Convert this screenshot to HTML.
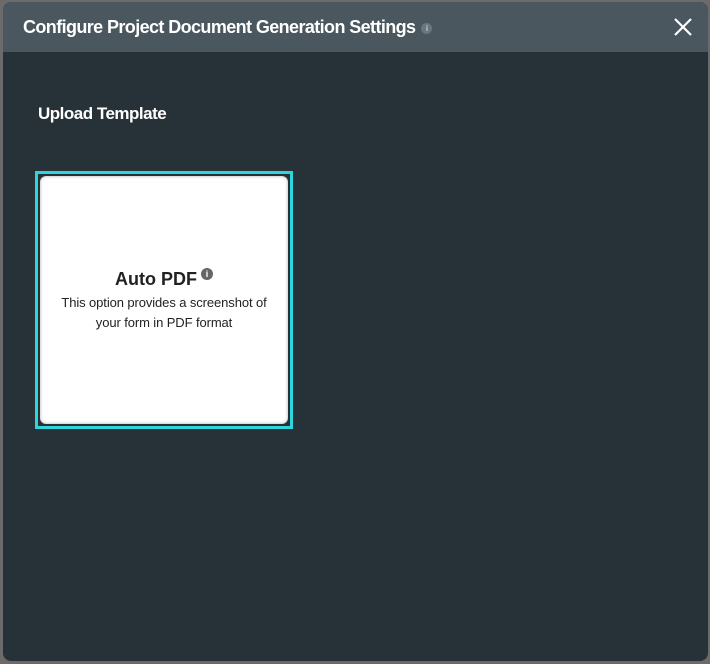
<!DOCTYPE html>
<html><head><style>
body{margin:0;width:710px;height:664px;background:#6b6b6b;font-family:"Liberation Sans",sans-serif;overflow:hidden;position:relative}
.m{position:absolute;left:3px;top:2px;width:705px;height:659px;background:#273238;border-radius:8px;overflow:hidden}
.h{height:50px;background:#4a575e;position:relative}
.t{position:absolute;left:20px;top:15px;color:#fff;font-weight:bold;font-size:18px;letter-spacing:-0.6px}
.i{display:inline-block;width:11px;height:11px;border-radius:50%;background:#6b767c;color:#ccc;font-size:8px;text-align:center;line-height:11px;vertical-align:2px;margin-left:6px;letter-spacing:0}
.x{position:absolute;right:16px;top:16px}
.u{position:absolute;left:35px;top:102px;color:#fff;font-weight:bold;font-size:17px;letter-spacing:-0.5px}
.c{position:absolute;left:32px;top:169px;width:252px;height:252px;border:3px solid #2fd5dd;background:#273238}
.w{position:absolute;left:2px;top:2px;right:2px;bottom:2px;background:#fff;border-radius:6px;box-shadow:inset 0 0 3px rgba(0,0,0,.35);text-align:center}
.a{margin-top:92px;font-size:18px;font-weight:bold;color:#222}
.a span{display:inline-block;width:12px;height:12px;border-radius:50%;background:#666;color:#fff;font-size:9px;line-height:12px;vertical-align:8px;margin-left:4px}
.d{font-size:13px;color:#222;line-height:20px;margin-top:3px;letter-spacing:-0.1px}
</style></head><body>
<div class="m">
<div class="h"><div class="t">Configure Project Document Generation Settings<span class="i">i</span></div>
<svg class="x" width="18" height="18" viewBox="0 0 18 18"><path d="M1 1L17 17M17 1L1 17" stroke="#fff" stroke-width="2.2"/></svg></div>
<div class="u">Upload Template</div>
<div class="c"><div class="w"><div class="a">Auto PDF<span>i</span></div><div class="d">This option provides a screenshot of<br>your form in PDF format</div></div></div>
</div>
</body></html>
